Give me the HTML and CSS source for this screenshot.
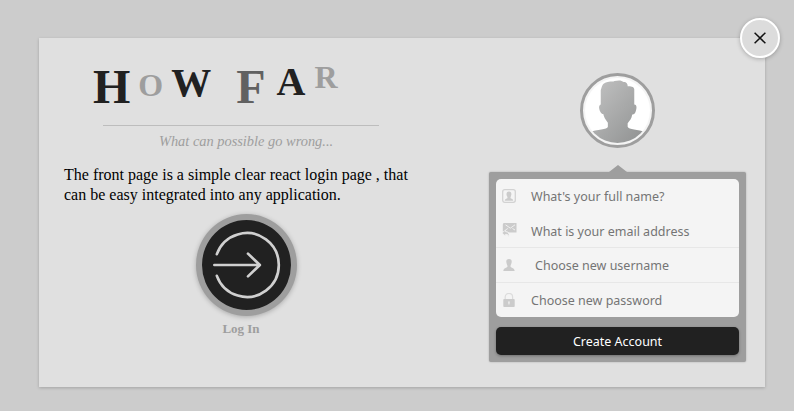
FILE: index.html
```html
<!DOCTYPE html>
<html lang="en">
<head>
<meta charset="utf-8">
<title>How Far</title>
<link rel="stylesheet" href="styles.css">
</head>
<body>
<main class="card">
  <button class="close" aria-label="Close"><svg width="12" height="12" viewBox="0 0 12 12"><path d="M.6.8 11.4 11.2M11.4.8.6 11.2" stroke="#111" stroke-width="1.5" fill="none"/></svg></button>
  <section class="intro">
    <h1 class="title"><span class="l-h">H</span><span class="l-o">O</span><span class="l-w">W</span><span class="l-f">F</span><span class="l-a">A</span><span class="l-r">R</span></h1>
    <p class="tagline">What can possible go wrong...</p>
    <p class="text">The front page is a simple clear react login page , that<br>can be easy integrated into any application.</p>
    <button class="login" aria-label="Log In">
      <svg width="89" height="90" viewBox="0 0 90 90" fill="none" stroke="#d0d0d0" stroke-width="2.7" stroke-linecap="round" stroke-linejoin="round"><path d="M15 34A32.3 32.3 0 1 1 15 56M12.5 45H58M46.5 33.5 58.5 45 46.5 56.5"/></svg>
    </button>
    <p class="login-label">Log In</p>
  </section>
  <section class="signup">
    <div class="avatar">
      <svg width="65" height="65" viewBox="0 0 64 64">
        <defs><linearGradient id="shade" x1="0" y1="0" x2="1" y2="1"><stop offset="0" stop-color="#c4c4c4"/><stop offset="1" stop-color="#8d8f8f"/></linearGradient><clipPath id="round"><circle cx="32" cy="32" r="32"/></clipPath></defs>
        <circle cx="32" cy="32" r="32" fill="#fff"/>
        <path clip-path="url(#round)" fill="url(#shade)" d="M4 53.500C12 50.500 22 51 22.500 48V44C20 41 18.500 38 18 35.500C15 35.500 12.500 28 14.700 26.500L15.500 26V12C16.500 9 17 7 18 6C20 4 24 3.500 28 3.500L29 3C33 2 36 2 38 4C41 4 42 6 42 8C45 8 48 8 48.500 11V26C51.500 26 51 30 49.500 34C49 35.500 47.500 36 46.500 36C46 40 44 42 42 44.500V48C43 51 52 50.500 60 53.500V66H4Z"/>
      </svg>
    </div>
    <form class="panel">
      <div class="fields">
        <label class="field"><svg width="14" height="14" viewBox="0 0 14 14"><rect x=".7" y=".7" width="12.600" height="12.600" rx="2" fill="none" stroke="#d2d2d2" stroke-width="1.300"/><path fill="#cbcbcb" d="M7 2.500c2.500 0 2.700 2.400 2.100 4C8.700 8 8.500 8 8.500 9c.3.800 2.700.6 2.700 2.800H2.800C2.800 9.600 5.200 9.800 5.500 9c0-1-.3-1.200-.8-2.500C4.200 4.900 4.500 2.500 7 2.500"/></svg><span>What's your full name?</span></label>
        <label class="field second"><svg width="15" height="14" viewBox="0 0 15 14"><path fill="#cbcbcb" d="M1.500 0H14.500V9.500H7.500L5 8.500H.8V1.500Z"/><path d="m3.500 1.800 4.800 3.400 4.700-3.400M3.500 7l2.300-1.500m4.700 0L13 7" stroke="#f4f4f4" fill="none" stroke-width=".9"/><path fill="#cbcbcb" stroke="#f4f4f4" stroke-width=".7" d="m0 10 3.500-3v1.700C6 8.700 7.500 10.500 7 13.500 6 11.500 5 11.300 3.500 11.300V13Z"/></svg><span>What is your email address</span></label>
        <label class="field third"><svg width="14" height="14" viewBox="0 0 14 14"><path fill="#cbcbcb" d="M7 1c2.500 0 3 1.800 2.600 3.500C9.300 6.500 8.500 7 8.500 8.500c.2 1.500 4 1.200 4.200 4.500H1.300c.2-3.300 4-3 4.200-4.500C5.500 7 4.700 6.500 4.400 4.500 4 2.800 4.500 1 7 1"/></svg><span>Choose new username</span></label>
        <label class="field fourth"><svg width="14" height="14" viewBox="0 0 14 14"><path d="M3.200 7V4C3.200-.7 10.600-.7 10.600 4v3" fill="none" stroke="#dcdcdc" stroke-width="1.200"/><rect x="1.300" y="6" width="11.400" height="8" rx=".8" fill="#cbcbcb"/><path d="M6.200 8.500h1.500l-.3 3h-.8Z" fill="#f4f4f4"/></svg><span>Choose new password</span></label>
      </div>
      <button type="button" class="create">Create Account</button>
    </form>
  </section>
</main>
</body>
</html>
```
FILE: styles.css
```css
* { box-sizing: border-box; }
body {
  margin: 0;
  height: 411px;
  padding: 38px 29px 0 39px;
  background: #ccc;
  font-family: "Liberation Serif", serif;
  overflow: hidden;
}
p, h1 { margin: 0; }
button { padding: 0; border: 0; }
.card {
  position: relative;
  display: flex;
  width: 726px;
  height: 349px;
  background: #e0e0e0;
  box-shadow: 0 1px 3px rgba(0, 0, 0, .2);
}
.close {
  position: absolute;
  top: -20px;
  right: -15px;
  display: grid;
  place-items: center;
  width: 40px;
  height: 40px;
  border: 2px solid #fff;
  border-radius: 50%;
  background: #dcdcdc;
  box-shadow: 0 1px 4px rgba(0, 0, 0, .25);
}
.intro { width: 450px; padding-top: 23px; }
.title {
  display: flex;
  align-items: flex-start;
  height: 64px;
  padding-left: 54px;
  line-height: 1;
  color: #212121;
  font-size: 40px;
}
.l-h, .l-f { font-size: 48px; margin-top: 2px; }
.l-o, .l-r { font-size: 32px; color: #9e9e9e; }
.l-o { margin: 8px 0 0 8px; }
.l-w { margin: 2px 0 0 8px; }
.l-f { margin-left: 25px; color: #616161; }
.l-a { margin: 1px 0 0 11px; }
.l-r { margin-left: 9px; }
.tagline {
  width: 276px;
  margin-left: 64px;
  padding-left: 10px;
  border-top: 1px solid #bdbdbd;
  color: #9e9e9e;
  font-size: 14.4px;
  font-style: italic;
  line-height: 31px;
  text-align: center;
}
.text {
  margin: 8px 0 0 25px;
  font-size: 16px;
  line-height: 20px;
  white-space: nowrap;
}
.login {
  display: block;
  width: 101px;
  height: 102px;
  margin: 9px 0 0 157px;
  border: 6px solid #9e9e9e;
  border-radius: 50%;
  background: #212121;
  box-shadow: 0 1px 5px rgba(0, 0, 0, .25);
}
.login svg { display: block; }
.login-label {
  width: 88px;
  margin: 5px 0 0 158px;
  color: #9e9e9e;
  font-size: 13px;
  font-weight: bold;
  line-height: 15px;
  text-align: center;
}
.signup { width: 257px; padding-top: 35px; }
.avatar {
  display: grid;
  place-items: center;
  width: 75px;
  height: 75px;
  margin-left: 91px;
  border: 3px solid #9e9e9e;
  border-radius: 50%;
  background: #f4f4f4;
}
.panel {
  position: relative;
  height: 190px;
  margin-top: 24px;
  padding: 7px 7px 0;
  border-radius: 2px;
  background: #9e9e9e;
  box-shadow: 0 0 2px rgba(0, 0, 0, .25);
  font-family: "Noto Sans", sans-serif;
}
.panel::before {
  content: "";
  position: absolute;
  left: 120px;
  top: -7px;
  border: solid transparent;
  border-width: 0 9px 7px;
  border-bottom-color: #9e9e9e;
}
.fields {
  height: 138px;
  border-radius: 5px;
  background: #f4f4f4;
  overflow: hidden;
}
.field {
  display: flex;
  align-items: center;
  gap: 15px;
  height: 34px;
  padding-left: 6px;
  color: #757575;
  font-size: 12.5px;
}
.field svg { flex: none; }
.second, .third { height: 35px; border-bottom: 1px solid #e7e7e7; }
.second { gap: 14px; }
.second span { padding-top: 2px; }
.third { gap: 19px; }
.create {
  display: block;
  width: 243px;
  height: 28px;
  margin-top: 10px;
  border-radius: 5px;
  background: #212121;
  box-shadow: 0 1px 3px rgba(0, 0, 0, .3);
  color: #fff;
  font: 12.5px "Noto Sans", sans-serif;
}
```
